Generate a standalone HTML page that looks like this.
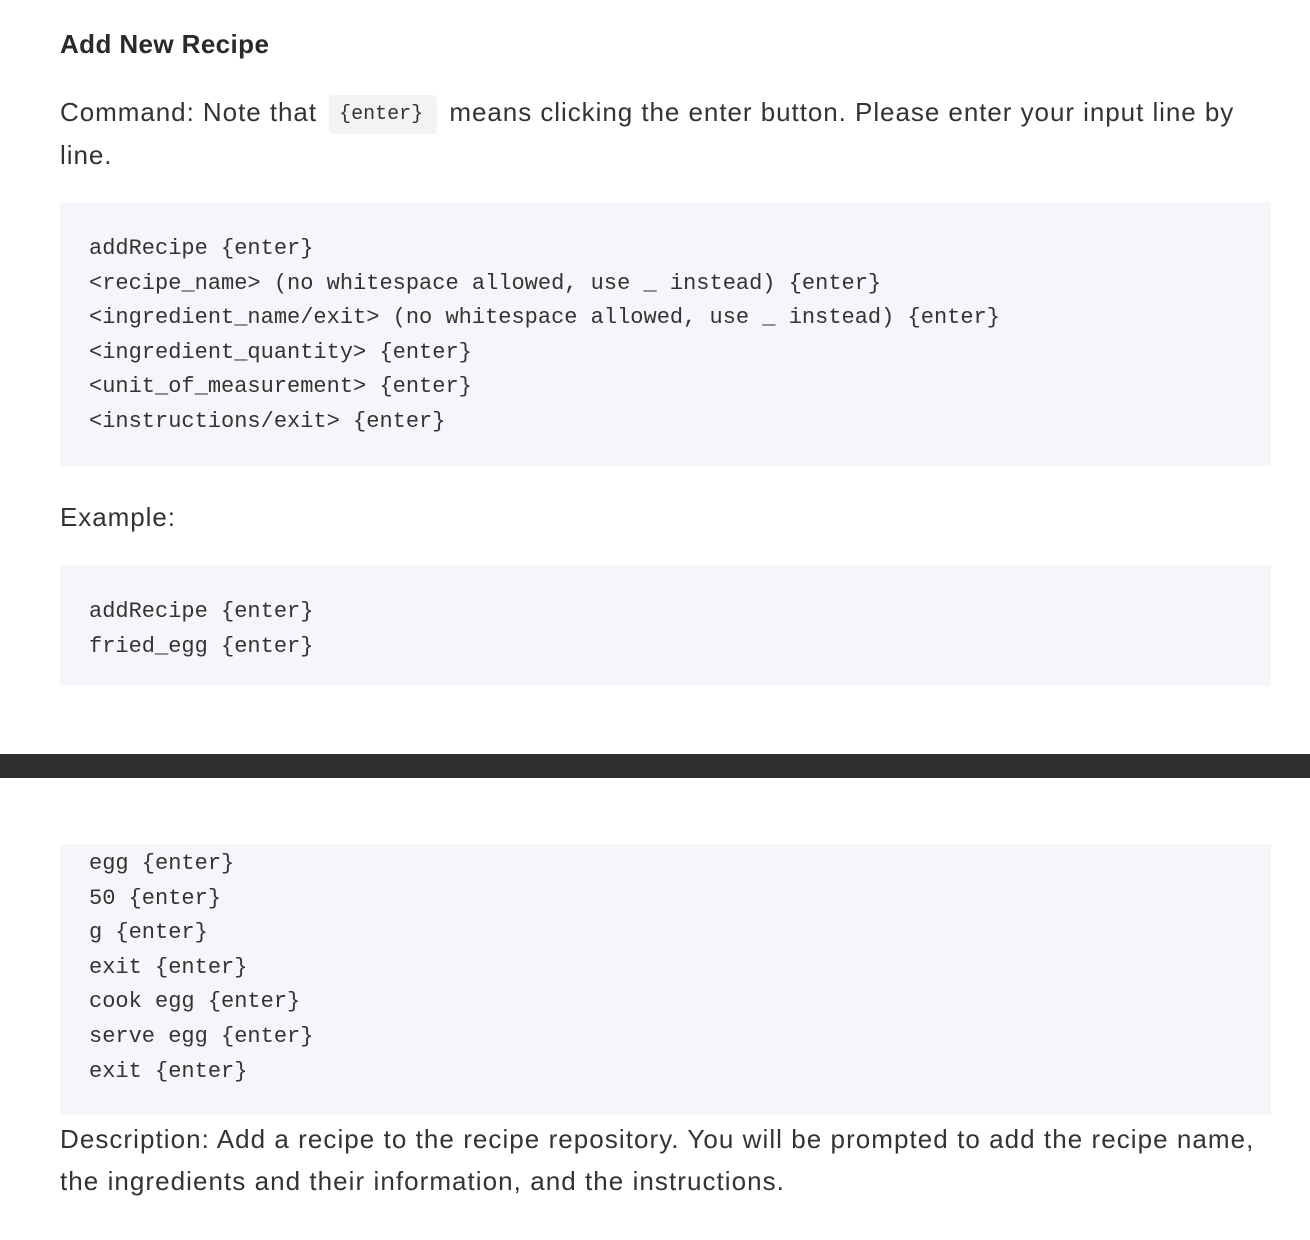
<!DOCTYPE html>
<html><head><meta charset="utf-8"><style>
body{margin:0;width:1310px;height:1240px;background:#fff;color:#333;font-family:"Liberation Sans",sans-serif;position:relative;overflow:hidden}
.a{position:absolute;white-space:nowrap}
h1{position:absolute;left:60px;top:26px;margin:0;font-size:26px;font-weight:bold;line-height:36px;color:#2a2a2a;letter-spacing:0.4px}
.p{font-size:26px;line-height:42px;left:60px;letter-spacing:0.95px}
.code{position:absolute;left:60px;width:1211px;background:#f5f6fa}
pre{margin:0;position:absolute;left:29px;font-family:"Liberation Mono",monospace;font-size:22px;line-height:34.6px;color:#333}
.ic{display:inline-block;background:#f2f3f3;border-radius:4px;font-family:"Liberation Mono",monospace;font-size:20px;letter-spacing:0;padding:0 14px 0 10px;line-height:39px;vertical-align:middle;margin:0 4px}
.bar{position:absolute;left:0;top:754px;width:1310px;height:24px;background:#2f2f2f}
</style></head><body>
<h1>Add New Recipe</h1>
<div class="a p" style="top:91px">Command: Note that <span class="ic">{enter}</span> means clicking the enter button. Please enter your input line by<br>line.</div>
<div class="code" style="top:202px;height:264px"><pre style="top:30px">addRecipe {enter}
&lt;recipe_name&gt; (no whitespace allowed, use _ instead) {enter}
&lt;ingredient_name/exit&gt; (no whitespace allowed, use _ instead) {enter}
&lt;ingredient_quantity&gt; {enter}
&lt;unit_of_measurement&gt; {enter}
&lt;instructions/exit&gt; {enter}</pre></div>
<div class="a p" style="top:496px">Example:</div>
<div class="code" style="top:565px;height:121px"><pre style="top:30px">addRecipe {enter}
fried_egg {enter}</pre></div>
<div class="bar"></div>
<div class="code" style="top:844px;height:271px"><pre style="top:3px">egg {enter}
50 {enter}
g {enter}
exit {enter}
cook egg {enter}
serve egg {enter}
exit {enter}</pre></div>
<div class="a p" style="top:1118px;letter-spacing:1.05px">Description: Add a recipe to the recipe repository. You will be prompted to add the recipe name,<br>the ingredients and their information, and the instructions.</div>
</body></html>
